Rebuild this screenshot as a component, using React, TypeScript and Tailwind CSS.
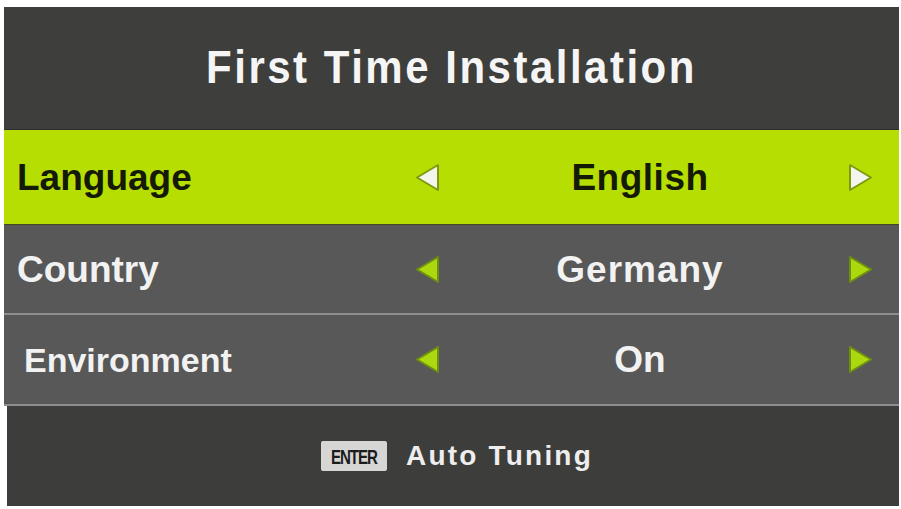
import React from "react";

function Arrow({ dir, white }: { dir: "left" | "right"; white?: boolean }) {
  const pts = dir === "left" ? "23,2 23,27 2,14.5" : "2,2 2,27 23,14.5";
  return (
    <svg width="25" height="29" viewBox="0 0 25 29" className="block">
      <polygon
        points={pts}
        fill={white ? "#f4f6ee" : "#acd80e"}
        stroke={white ? "#7d9a10" : "#6f8f12"}
        strokeWidth="2"
        strokeLinejoin="round"
      />
    </svg>
  );
}

function Row({
  label,
  value,
  active,
  labelPad,
  labelSize,
  valueTrack,
}: {
  label: string;
  value: string;
  active?: boolean;
  labelPad: string;
  labelSize: string;
  valueTrack: string;
}) {
  const text = active ? "text-[#141a05]" : "text-[#f2f2f2]";
  return (
    <div
      className={`grid grid-cols-[411px_25px_400px_8px_25px_1fr] items-center h-full ${
        active ? "bg-[#b6de02]" : "bg-[#585858]"
      }`}
    >
      <div className={`${labelPad} ${labelSize} font-bold ${text} leading-none`}>{label}</div>
      <div className="flex justify-center">
        <Arrow dir="left" white={active} />
      </div>
      <div className={`text-center text-[37px] font-bold ${text} ${valueTrack} leading-none`}>{value}</div>
      <div />
      <div className="flex justify-center">
        <Arrow dir="right" white={active} />
      </div>
      <div />
    </div>
  );
}

export default function App() {
  return (
    <div
      className="w-[901px] h-[509px] bg-white overflow-hidden"
      style={{ fontFamily: '"Liberation Sans", Arial, sans-serif' }}
    >
      <div className="pt-[7px] pl-[4px] pr-[2px] flex flex-col">
        <div className="h-[123px] bg-[#3e3e3c] flex items-center justify-center border-b border-[#2e2e2c]">
          <div className="text-[42px] font-bold text-[#f5f5f5] tracking-[2.5px] leading-none pb-[3px] scale-y-[1.12]">
            First Time Installation
          </div>
        </div>
        <div className="h-[95px] border-b border-[#3f4a20]">
          <Row
            label="Language"
            value="English"
            active
            labelPad="pl-[13px]"
            labelSize="text-[37px]"
            valueTrack="tracking-[0.5px]"
          />
        </div>
        <div className="h-[88px]">
          <Row
            label="Country"
            value="Germany"
            labelPad="pl-[13px]"
            labelSize="text-[37px]"
            valueTrack="tracking-[1px]"
          />
        </div>
        <div className="h-[2px] bg-[#8e8e8e]" />
        <div className="h-[89px]">
          <Row
            label="Environment"
            value="On"
            labelPad="pl-[20px]"
            labelSize="text-[34px]"
            valueTrack="tracking-[0px]"
          />
        </div>
        <div className="h-[2px] bg-[#8e8e8e]" />
        <div className="h-[100px] ml-[3px] bg-[#3d3d3b] flex items-center justify-center gap-[19px] pl-[8px]">
          <div className="h-[30px] w-[66px] bg-[#d6d6d4] flex items-center justify-center rounded-[2px] overflow-hidden">
            <span className="text-[21px] font-bold text-[#1b1b1b] tracking-[-1.5px] leading-none scale-x-[0.72]">
              ENTER
            </span>
          </div>
          <div className="text-[28px] font-bold text-[#eeeeee] tracking-[2.2px] leading-none">
            Auto Tuning
          </div>
        </div>
      </div>
    </div>
  );
}
